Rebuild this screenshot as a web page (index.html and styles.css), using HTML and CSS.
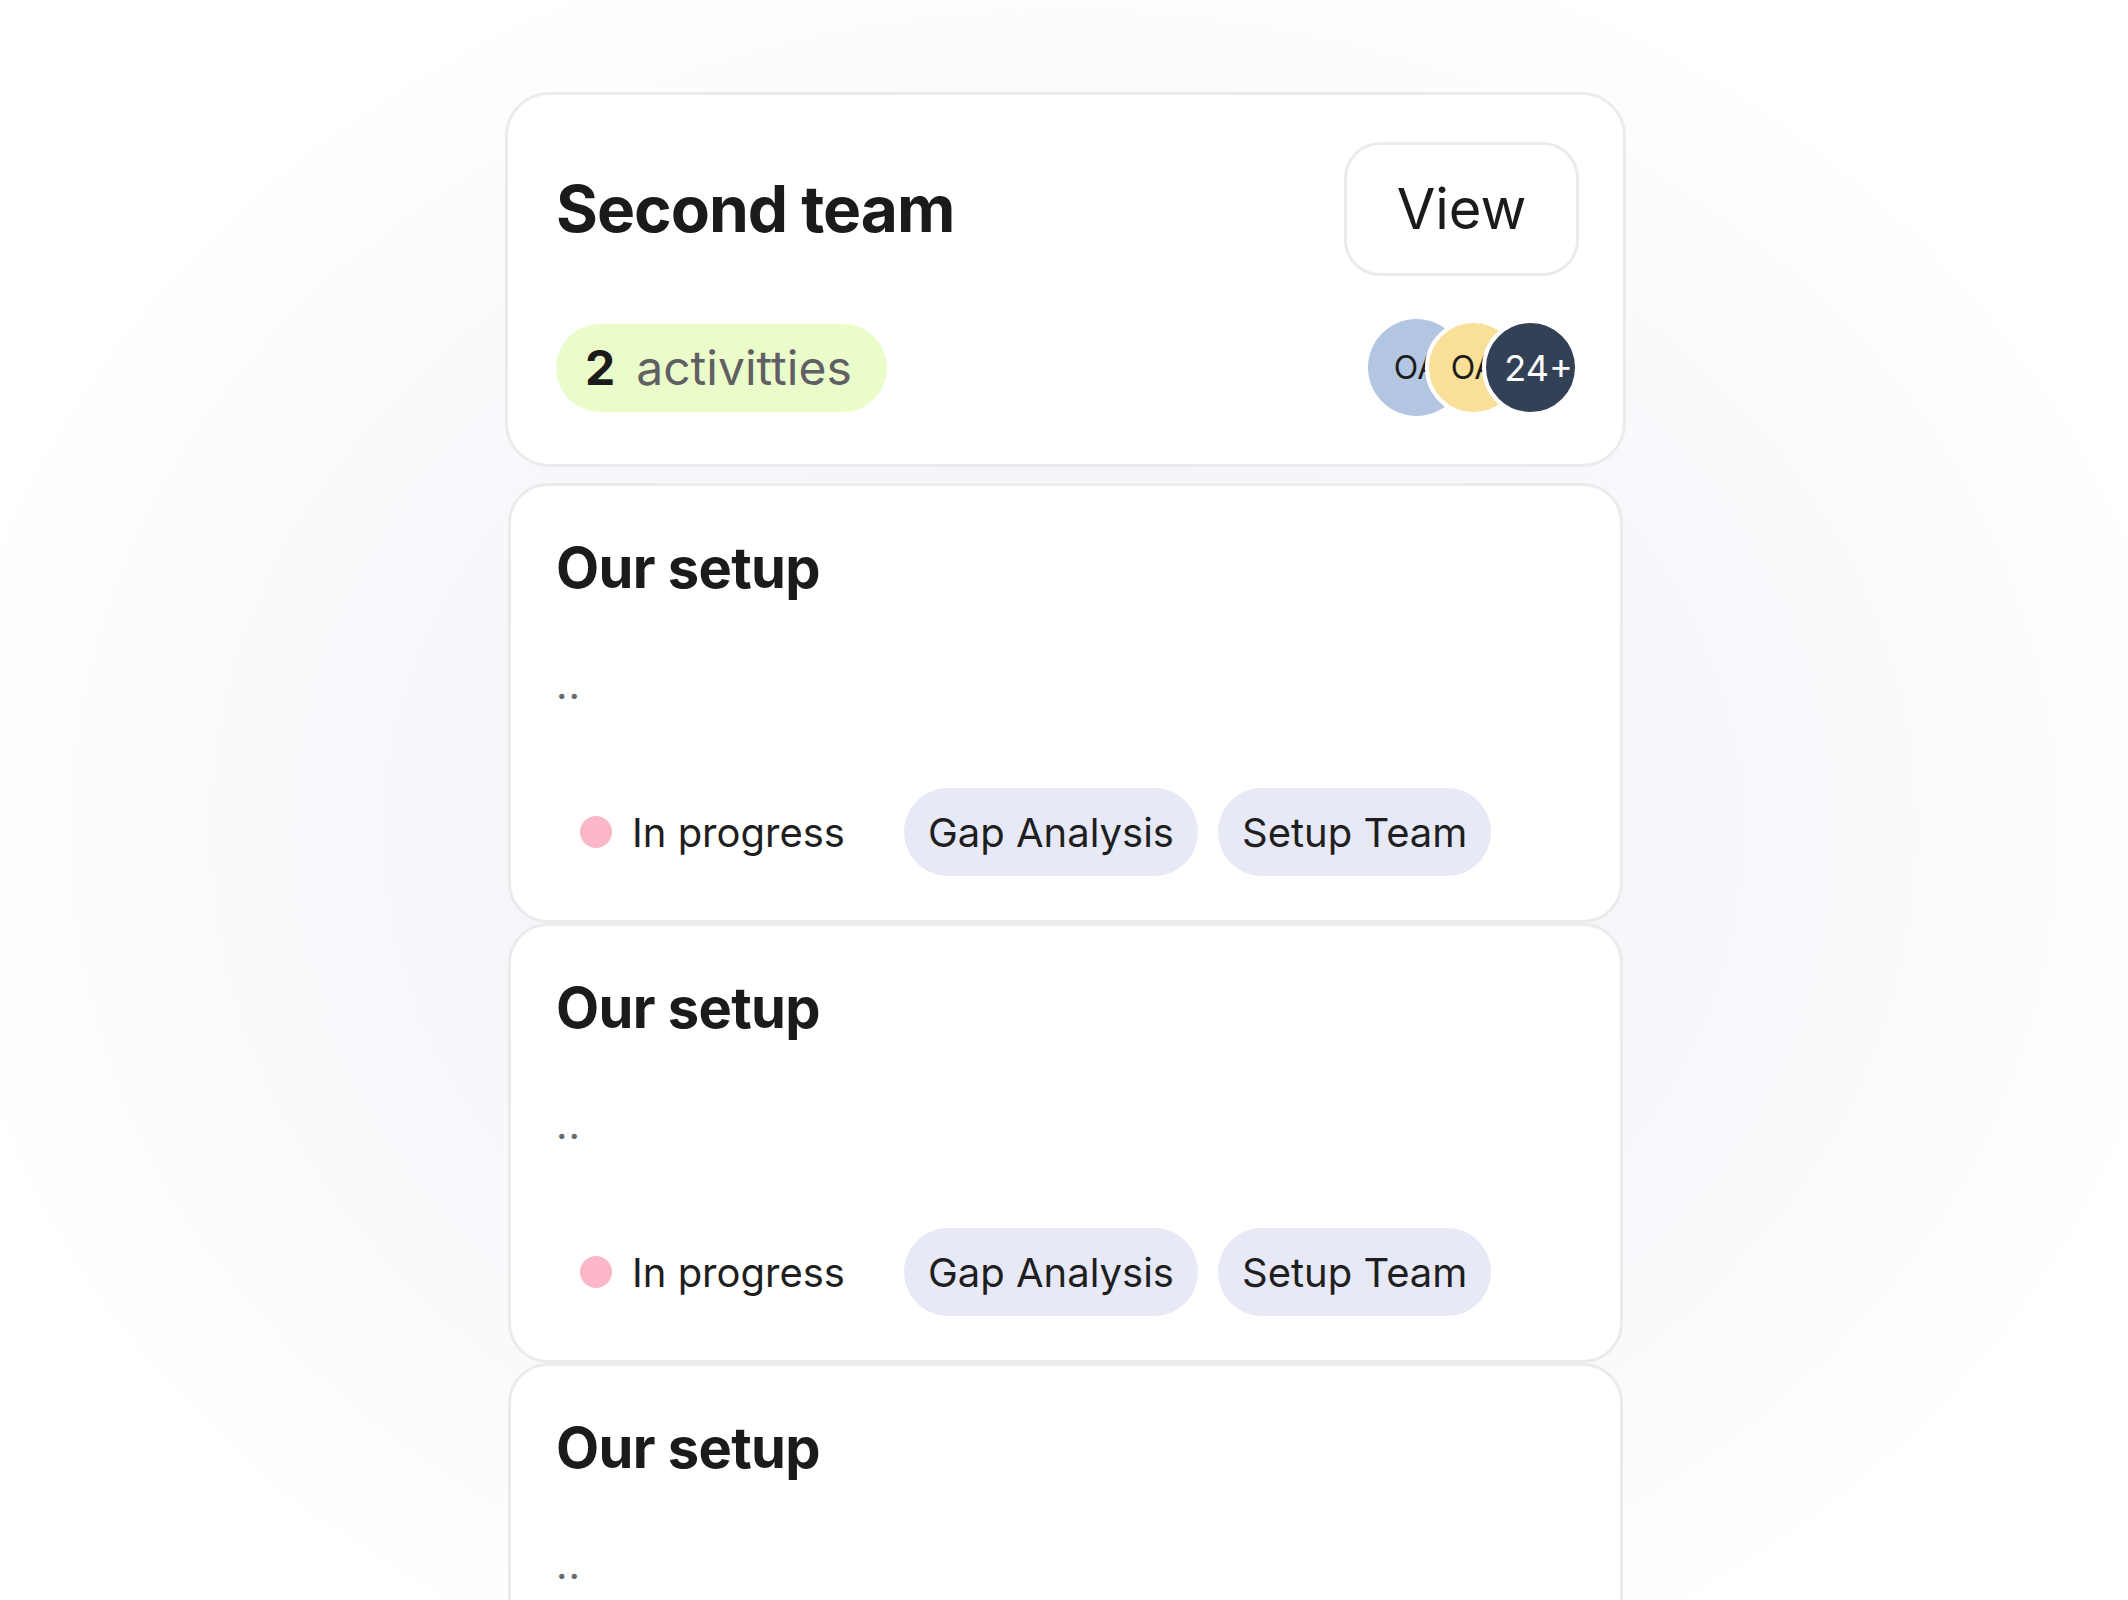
FILE: index.html
```html
<!DOCTYPE html>
<html lang="en">
<head>
<meta charset="utf-8">
<title>Second team</title>
<link rel="stylesheet" href="styles.css">
</head>
<body>
<main class="board">
  <section class="team-card">
    <div class="team-head">
      <h1 class="team-title">Second team</h1>
      <button class="view-btn" type="button">View</button>
    </div>
    <div class="team-meta">
      <span class="count-pill"><b class="count-num">2</b><span class="count-label">activitties</span></span>
      <div class="avatars">
        <span class="avatar avatar-blue">OA</span>
        <span class="avatar avatar-yellow avatar-ringed">OA</span>
        <span class="avatar avatar-dark avatar-ringed">24+</span>
      </div>
    </div>
  </section>

  <ul class="activity-list">
    <li class="activity-card">
      <h2 class="activity-title">Our setup</h2>
      <p class="activity-desc">..</p>
      <div class="activity-tags">
        <span class="status"><span class="status-dot"></span>In progress</span>
        <span class="tag">Gap Analysis</span>
        <span class="tag">Setup Team</span>
      </div>
    </li>
    <li class="activity-card">
      <h2 class="activity-title">Our setup</h2>
      <p class="activity-desc">..</p>
      <div class="activity-tags">
        <span class="status"><span class="status-dot"></span>In progress</span>
        <span class="tag">Gap Analysis</span>
        <span class="tag">Setup Team</span>
      </div>
    </li>
    <li class="activity-card">
      <h2 class="activity-title">Our setup</h2>
      <p class="activity-desc">..</p>
      <div class="activity-tags">
        <span class="status"><span class="status-dot"></span>In progress</span>
        <span class="tag">Gap Analysis</span>
        <span class="tag">Setup Team</span>
      </div>
    </li>
  </ul>
</main>
</body>
</html>
```

FILE: styles.css
```css
* { box-sizing: border-box; }

html, body {
  margin: 0;
  height: 1600px;
  overflow: hidden;
}

body {
  padding-left: 3px;
  font-family: Inter, "Noto Sans", "Liberation Sans", sans-serif;
  color: #1b1b1b;
  background: radial-gradient(ellipse 1150px 950px at 50% 52%, #f2f3f8 0%, #f5f6fa 45%, #fbfbfd 80%, #ffffff 100%);
}

.board {
  width: 1121px;
  margin: 92px auto 0;
}

/* Team card */
.team-card {
  background: #fff;
  border: 3px solid #ebebeb;
  border-radius: 44px;
  padding: 47px 44px 48px 48px;
}

.team-head {
  display: flex;
  align-items: center;
  justify-content: space-between;
}

.team-title {
  margin: 0;
  font-size: 64px;
  font-weight: 700;
  line-height: 78px;
  letter-spacing: -1px;
  color: #1b1b1b;
}

.view-btn {
  width: 235px;
  height: 134px;
  background: #fff;
  border: 3px solid #ebebeb;
  border-radius: 36px;
  font-family: inherit;
  font-size: 56px;
  font-weight: 400;
  color: #1b1b1b;
  padding: 0;
}

.team-meta {
  display: flex;
  align-items: center;
  justify-content: space-between;
  margin-top: 43px;
}

.count-pill {
  display: inline-flex;
  align-items: center;
  gap: 21px;
  height: 88px;
  padding: 0 35px 0 29px;
  border-radius: 44px;
  background: #ebfccb;
  font-size: 48px;
}

.count-num {
  font-weight: 700;
  color: #1b1b1b;
}

.count-label {
  color: #5f5f64;
  font-weight: 400;
}

.avatars {
  display: flex;
  align-items: center;
}

.avatar {
  width: 97px;
  height: 97px;
  border-radius: 50%;
  display: flex;
  align-items: center;
  justify-content: center;
  overflow: hidden;
  white-space: nowrap;
  font-size: 32px;
  color: #1b1b1b;
}

.avatar + .avatar {
  margin-left: -40px;
}

.avatar-ringed {
  border: 4px solid #fff;
}

.avatar-blue { background: #b2c5e1; }
.avatar-yellow { background: #f9df98; }
.avatar-dark {
  background: #334157;
  color: #fff;
  font-size: 36px;
  padding-left: 16px;
}

/* Activity cards */
.activity-list {
  list-style: none;
  margin: 16px 3px 0;
  padding: 0;
}

.activity-card {
  background: #fff;
  border: 3px solid #ebebeb;
  border-radius: 40px;
  padding: 48px 45px 44px 45px;
}

.activity-title {
  margin: 0;
  font-size: 56px;
  font-weight: 700;
  line-height: 68px;
  letter-spacing: -0.6px;
  color: #1b1b1b;
}

.activity-desc {
  margin: 59px 0 0;
  font-size: 40px;
  line-height: 48px;
  color: #6a6a6e;
  letter-spacing: 1px;
}

.activity-tags {
  display: flex;
  align-items: center;
  gap: 20px;
  margin-top: 79px;
}

.status {
  display: inline-flex;
  align-items: center;
  gap: 20px;
  height: 88px;
  padding: 0 39px 0 24px;
  font-size: 40px;
  color: #1f1f1f;
}

.status-dot {
  width: 32px;
  height: 32px;
  border-radius: 50%;
  background: #fbb7c7;
}

.tag {
  display: inline-flex;
  align-items: center;
  height: 88px;
  padding: 0 24px;
  border-radius: 44px;
  background: #e8e9f6;
  font-size: 40px;
  color: #1f1f1f;
}
```
